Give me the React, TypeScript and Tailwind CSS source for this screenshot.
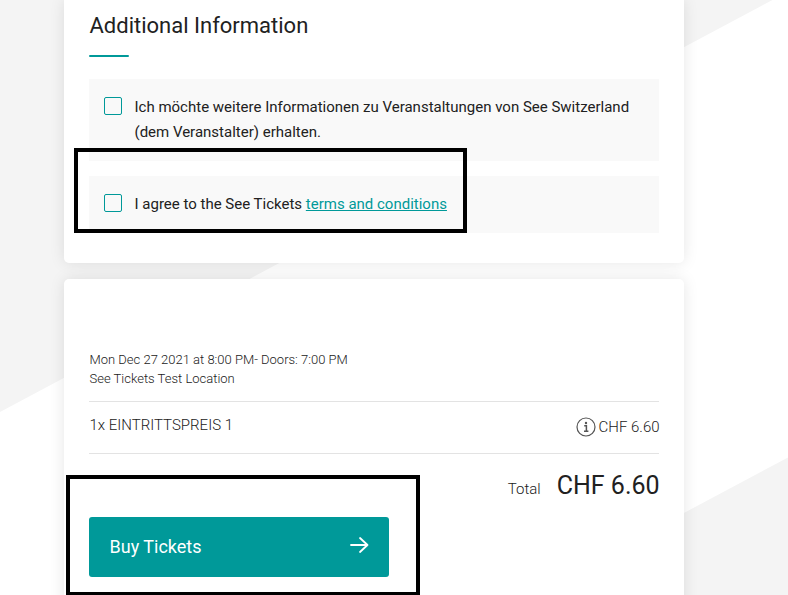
import type { ReactNode } from "react";

const FONT = "font-['Roboto',sans-serif]";

function Backdrop() {
  return (
    <svg
      className="absolute inset-0"
      width="788"
      height="595"
      viewBox="0 0 788 595"
      fill="#f4f4f4"
      aria-hidden="true"
    >
      <path d="M0 0H772.5L0 412Z" />
      <path d="M788 457.5V595H530Z" />
    </svg>
  );
}

function Card({ className, children }: { className: string; children: ReactNode }) {
  return (
    <section
      className={`w-[620px] bg-white px-[25px] shadow-[0_0_15px_rgba(0,0,0,0.1)] ${className}`}
    >
      {children}
    </section>
  );
}

function CheckRow({ className, children }: { className: string; children: ReactNode }) {
  return (
    <label className={`flex bg-[#f9f9f9] pl-[15px] pr-5 ${className}`}>
      <input
        type="checkbox"
        className="mt-[18px] size-[18px] shrink-0 appearance-none rounded-[2px] border border-[#009999]"
      />
      <span className="ml-[12.5px] mt-4 text-[15px] leading-[25px] text-[#212121]">{children}</span>
    </label>
  );
}

function InfoIcon() {
  return (
    <svg width="20" height="20" viewBox="0 0 20 20" fill="none" stroke="#555" aria-hidden="true">
      <circle cx="10" cy="10" r="9" strokeWidth="1.2" />
      <path d="M8.2 8.7h2.2v5.1M8 14.2h4.4" strokeWidth="1.5" />
      <circle cx="10" cy="6" r="1.2" fill="#555" stroke="none" />
    </svg>
  );
}

export default function App() {
  return (
    <main className={`relative h-[595px] w-[788px] overflow-hidden bg-white text-[#212121] ${FONT}`}>
      <Backdrop />

      <div className="relative ml-16 flex w-[620px] flex-col gap-4">
        <Card className="h-[263px] rounded-b-[5px]">
          <h2 className="pl-[0.5px] pt-[11px] text-[22px] leading-[30px]">Additional Information</h2>
          <div className="mt-[14px] h-[2px] w-10 rounded-full bg-[#009999]" />
          <CheckRow className="mt-[22px] h-[82px]">
            Ich möchte weitere Informationen zu Veranstaltungen von See Switzerland (dem
            Veranstalter) erhalten.
          </CheckRow>
          <CheckRow className="mt-[15px] h-[57px]">
            I agree to the See Tickets{" "}
            <a href="#" className="text-[#009999] underline">
              terms and conditions
            </a>
          </CheckRow>
        </Card>

        <Card className="h-[360px] rounded-t-[5px] font-light">
          <div className="border-b border-[#e3e3e3] pb-[13px] pl-[0.5px] pt-[71px] text-[13px] leading-[19px]">
            <p>Mon Dec 27 2021 at 8:00 PM- Doors: 7:00 PM</p>
            <p>See Tickets Test Location</p>
          </div>
          <div className="flex h-[52px] justify-between border-b border-[#e3e3e3] pl-[0.5px] text-[15px] leading-6">
            <span className="mt-[11px]">1x EINTRITTSPREIS 1</span>
            <span className="-mr-[0.6px] mt-[13px] flex items-start gap-[3px]">
              <span className="pt-[1.6px]">
                <InfoIcon />
              </span>
              <span>CHF 6.60</span>
            </span>
          </div>
          <div className="-mr-[0.6px] flex h-[63px] items-baseline justify-end gap-4 pt-4">
            <span className="text-[15px]">Total</span>
            <span className="text-[25px] font-normal leading-8">CHF 6.60</span>
          </div>
          <button className="flex h-[60px] w-[300px] items-center justify-between rounded-[3px] bg-[#009999] pb-[2px] pl-[20.5px] pr-5 text-[18px] font-normal text-white">
            Buy Tickets
            <svg
              className="mb-[2px]"
              width="20"
              height="18"
              viewBox="0 0 20 18"
              fill="none"
              stroke="currentColor"
              strokeWidth="1.8"
              strokeLinecap="round"
              strokeLinejoin="round"
              aria-hidden="true"
            >
              <path d="M2 9H18.5M11 2L18.5 9L11 16" />
            </svg>
          </button>
        </Card>
      </div>

      <div className="pointer-events-none absolute left-[74px] top-[148px] h-[85px] w-[393px] border-4 border-black" />
      <div className="pointer-events-none absolute left-[66px] top-[475px] h-[121px] w-[354px] border-4 border-black" />
    </main>
  );
}
